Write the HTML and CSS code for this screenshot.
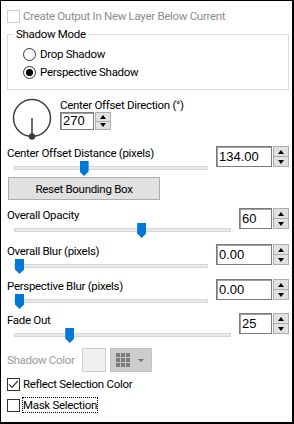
FILE: index.html
```html
<!DOCTYPE html>
<html lang="en">
<head>
  <meta charset="UTF-8" />
  <title>Perspective Shadow</title>
  <link rel="stylesheet" href="styles.css">
</head>
<body>
  <div class="dialog">
    <div class="check disabled first">
      <span class="box"></span>
      <span>Create Output In New Layer Below Current</span>
    </div>

    <fieldset class="group">
      <legend>Shadow Mode</legend>
      <div class="radio"><span class="dot"></span><span>Drop Shadow</span></div>
      <div class="radio checked"><span class="dot"></span><span>Perspective Shadow</span></div>
    </fieldset>

    <div class="direction">
      <svg class="dial" width="40" height="43" viewBox="0 0 40 43">
        <circle cx="20" cy="20" r="18.5" fill="none" stroke="#3c3c3c" stroke-width="1.5"/>
        <line x1="20" y1="20" x2="20" y2="38" stroke="#3c3c3c" stroke-width="1.5"/>
        <circle cx="20" cy="38.5" r="3.2" fill="#3c3c3c"/>
      </svg>
      <div class="direction-field">
        <div class="label">Center Offset Direction (°)</div>
        <div class="spin small">
          <span class="value">270</span>
          <span class="arrows"><span class="up"></span><span class="down"></span></span>
        </div>
      </div>
    </div>

    <div class="slider-row distance">
      <div class="slider-main">
        <div class="label">Center Offset Distance (pixels)</div>
        <div class="track"><span class="thumb" style="left: calc((100% - 9px) * 0.353)"></span></div>
      </div>
      <div class="spin wide">
        <span class="value">134.00</span>
        <span class="arrows"><span class="up"></span><span class="down"></span></span>
      </div>
    </div>

    <div class="reset-row">
      <button class="button" type="button">Reset Bounding Box</button>
    </div>

    <div class="slider-row opacity">
      <div class="slider-main">
        <div class="label">Overall Opacity</div>
        <div class="track"><span class="thumb" style="left: calc((100% - 9px) * 0.593)"></span></div>
      </div>
      <div class="spin narrow">
        <span class="value">60</span>
        <span class="arrows"><span class="up"></span><span class="down"></span></span>
      </div>
    </div>

    <div class="slider-row blur">
      <div class="slider-main">
        <div class="label">Overall Blur (pixels)</div>
        <div class="track"><span class="thumb" style="left: 0"></span></div>
      </div>
      <div class="spin wide">
        <span class="value">0.00</span>
        <span class="arrows"><span class="up"></span><span class="down"></span></span>
      </div>
    </div>

    <div class="slider-row persp">
      <div class="slider-main">
        <div class="label">Perspective Blur (pixels)</div>
        <div class="track"><span class="thumb" style="left: 0"></span></div>
      </div>
      <div class="spin wide">
        <span class="value">0.00</span>
        <span class="arrows"><span class="up"></span><span class="down"></span></span>
      </div>
    </div>

    <div class="slider-row fade">
      <div class="slider-main">
        <div class="label">Fade Out</div>
        <div class="track"><span class="thumb" style="left: calc((100% - 9px) * 0.244)"></span></div>
      </div>
      <div class="spin narrow">
        <span class="value">25</span>
        <span class="arrows"><span class="up"></span><span class="down"></span></span>
      </div>
    </div>

    <div class="color-row">
      <span class="label disabled-text">Shadow Color</span>
      <span class="swatch"></span>
      <span class="picker">
        <svg width="14" height="14" viewBox="0 0 14 14">
          <rect x="0" y="0" width="14" height="14" fill="#7d7d7d"/>
          <path d="M4.5 0V14M9.5 0V14M0 4.5H14M0 9.5H14" stroke="#c4c4c4" stroke-width="1"/>
        </svg>
        <span class="caret"></span>
      </span>
    </div>

    <div class="check checked reflect">
      <span class="box">
        <svg width="11" height="11" viewBox="0 0 11 11">
          <path d="M1.2 5.4L4 8.4L9.8 2" fill="none" stroke="#333" stroke-width="1.2"/>
        </svg>
      </span>
      <span>Reflect Selection Color</span>
    </div>

    <div class="check mask">
      <span class="box"></span>
      <span class="focus">Mask Selection</span>
    </div>
  </div>
</body>
</html>
```

FILE: styles.css
```css
html, body {
  margin: 0;
  background: #fff;
}

.dialog {
  box-sizing: border-box;
  width: 294px;
  height: 424px;
  border-style: solid;
  border-color: #000;
  border-width: 1px 2px 2px 1px;
  padding: 0 3px 0 6px;
  font-family: Roboto, "Liberation Sans", sans-serif;
  font-size: 11.5px;
  letter-spacing: -0.3px;
  line-height: 14px;
  color: #000;
  overflow: hidden;
}

/* Checkboxes and radios */
.check, .radio {
  display: flex;
  align-items: center;
  gap: 3px;
  height: 14px;
}

.check .box {
  box-sizing: border-box;
  width: 13px;
  height: 13px;
  border: 1px solid #333;
  background: #fff;
  display: flex;
  align-items: center;
  justify-content: center;
}

.check.disabled { color: #8d8d8d; }
.check.disabled .box { border-color: #cccccc; }

.check.first { margin-top: 8px; }

.group {
  margin: 4px 0 0 0;
  padding: 6px 0 10px 6px;
  border: 1px solid #dcdcdc;
  min-width: 0;
}

.group legend {
  padding: 0 2px;
}

.radio {
  gap: 4px;
  margin-left: 9px;
}

.radio + .radio { margin-top: 4px; }

.radio .dot {
  box-sizing: border-box;
  width: 13px;
  height: 13px;
  border: 1px solid #333;
  border-radius: 50%;
  display: flex;
  align-items: center;
  justify-content: center;
}

.radio.checked .dot::after {
  content: "";
  width: 7px;
  height: 7px;
  border-radius: 50%;
  background: #000;
}

/* Direction dial */
.direction {
  display: flex;
  margin-top: 8px;
  padding-left: 5px;
}

.dial { display: block; }

.direction-field { margin-left: 8px; }

/* Spin boxes */
.spin {
  display: flex;
  height: 21px;
  letter-spacing: 0;
}

.spin .value {
  box-sizing: border-box;
  height: 100%;
  border: 1px solid #7a7a7a;
  box-shadow: inset 1px 1px 0 #a0a0a0;
  padding: 1px 0 0 2px;
  font-family: "Liberation Sans", Arial, sans-serif;
  font-size: 13px;
  line-height: 18px;
}

.spin .arrows {
  display: flex;
  flex-direction: column;
  width: 16px;
  margin-left: 1px;
}

.spin .up, .spin .down {
  flex: 1;
  box-sizing: border-box;
  border: 1px solid #adadad;
  background: #e1e1e1;
  display: flex;
  align-items: center;
  justify-content: center;
}

.spin .down { border-top: 0; }

.spin .up::after, .spin .down::after {
  content: "";
  border-left: 3.5px solid transparent;
  border-right: 3.5px solid transparent;
}

.spin .up::after { border-bottom: 4px solid #000; }
.spin .down::after { border-top: 4px solid #000; }

.spin.small { height: 18px; }
.spin.small .value { width: 34px; padding-top: 0; line-height: 16px; }
.spin.wide .value { width: 56px; }
.spin.narrow .value { width: 33px; }

/* Slider rows */
.slider-row {
  display: flex;
  align-items: flex-start;
}

.slider-main { flex: 1; }

.slider-row .spin { margin-left: 8px; }

.track {
  position: relative;
  box-sizing: border-box;
  height: 4px;
  margin: 6px 0 0 7px;
  background: #e7eaea;
  border: 1px solid #d6d6d6;
}

.thumb {
  position: absolute;
  top: -6px;
  width: 9px;
  height: 15px;
  background: #0078d7;
  clip-path: polygon(0 0, 100% 0, 100% 70%, 50% 100%, 0 70%);
}

.distance { margin-top: 5px; }
.opacity { margin-top: 8px; }
.blur { margin-top: 12px; }
.persp { margin-top: 11px; }
.fade { margin-top: 10px; }

/* Button */
.reset-row { margin-top: 7px; }

.button {
  display: block;
  box-sizing: border-box;
  width: 152px;
  height: 23px;
  margin-left: 1px;
  border: 1px solid #adadad;
  background: #e1e1e1;
  font: inherit;
  letter-spacing: inherit;
  color: #000;
  padding: 0;
}

/* Shadow color */
.color-row {
  display: flex;
  align-items: center;
  margin-top: 11px;
  height: 24px;
}

.disabled-text { color: #9a9a9a; }

.swatch {
  box-sizing: border-box;
  width: 24px;
  height: 24px;
  margin-left: 7px;
  border: 1px solid #cccccc;
  background: #f0f0f0;
}

.picker {
  box-sizing: border-box;
  display: flex;
  align-items: center;
  width: 42px;
  height: 24px;
  margin-left: 4px;
  padding-left: 5px;
  background: #cccccc;
  border: 1px solid #c4c4c4;
}

.picker svg { display: block; }

.caret {
  margin-left: 8px;
  border-left: 3.5px solid transparent;
  border-right: 3.5px solid transparent;
  border-top: 3.5px solid #6e6e6e;
}

.reflect { margin-top: 5px; }
.mask { margin-top: 7px; }

.focus {
  outline: 1px dotted #000;
  outline-offset: 0;
}
```
